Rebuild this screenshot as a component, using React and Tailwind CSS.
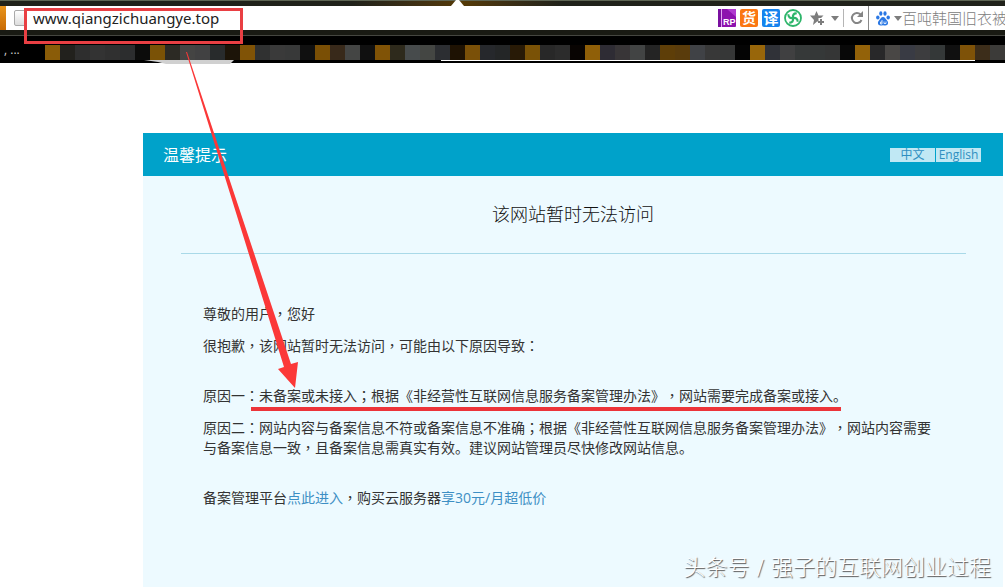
import React from 'react';

// one entry per 15px block of the blurred bookmarks bar
const mosaic = [
  '#000000', '#000000', '#000000', '#8a5c08', '#22211d', '#2e2e2e', '#333333', '#303030', '#2c2d2e', '#0c0c0b',
  '#7a5206', '#2c2a24', '#444443', '#414142', '#282b2c', '#1c1408', '#805306', '#303131', '#3a3a3a', '#383939', '#101010',
  '#7a4f05', '#38291a', '#444544', '#101010', '#805306', '#2e2a1c', '#474b4c', '#444643', '#2c2e32', '#1e1203',
  '#7a5008', '#26282c', '#242627', '#281a06', '#7a5206', '#282828', '#2c2c2c', '#080402', '#8f5f08', '#2e2c34',
  '#383537', '#424444', '#242424', '#5e3e08', '#5a3c0c', '#404246', '#383838', '#363737', '#040404', '#98660a',
  '#303238', '#404041', '#363939', '#353838', '#353636', '#080808', '#936209', '#282829', '#494745', '#393b44',
  '#3d3d3f', '#343838', '#101010', '#7e5208', '#3c2d1a', '#3c3b39',
];

const Caret = () => (
  <svg width="8" height="5" viewBox="0 0 8 5" aria-hidden="true">
    <path d="M0 0h8L4 5z" fill="#7d7d7d" />
  </svg>
);

const ProxyIcon = () => (
  <svg width="18" height="18" viewBox="0 0 18 18" aria-hidden="true">
    <rect width="18" height="18" rx="1" fill="#8d12ae" />
    <path d="M0 0h3v18H0z" fill="#7a10a0" />
    <path d="M3 0h1v18H3z" fill="#e3a5f2" />
    <path d="M9 0h9v8z" fill="#b03ad0" />
    <text x="5" y="16" fontSize="9" fontWeight="700" fontFamily="Liberation Sans, sans-serif" fill="#fff">RP</text>
  </svg>
);

const PinwheelIcon = () => (
  <svg width="18" height="18" viewBox="0 0 18 18" fill="none" aria-hidden="true">
    <circle cx="9" cy="9" r="8" stroke="#2db56a" strokeWidth="1.8" />
    {[20, 110, 200, 290].map((angle) => (
      <path key={angle} d="M9 9C7.500 6.500 8 4 11 3.500" stroke="#2db56a" strokeWidth="2.200" transform={`rotate(${angle} 9 9)`} />
    ))}
  </svg>
);

const StarIcon = () => (
  <svg width="15" height="15" viewBox="0 0 15 15" aria-hidden="true">
    <path d="M6.500 0l2 4.500h5L11 7H8.500v3.500H7L6.500 11 3 14l1-5-4-4.500h4.500z" fill="#7d7d7d" />
    <path d="M11 8v6M8 11h6" stroke="#7d7d7d" strokeWidth="2" />
  </svg>
);

const ReloadIcon = () => (
  <svg width="14" height="14" viewBox="0 0 14 14" fill="none" aria-hidden="true">
    <path d="M10.500 3.500A5 5 0 1 0 11.500 9" stroke="#858585" strokeWidth="2" />
    <path d="M13 0v6H7z" fill="#858585" />
  </svg>
);

const PawIcon = () => (
  <svg width="14" height="15" viewBox="0 0 14 15" aria-hidden="true">
    <g fill="#2b78e4">
      <ellipse cx="1.800" cy="6.500" rx="1.700" ry="2" />
      <ellipse cx="4.800" cy="2.500" rx="1.600" ry="2.200" />
      <ellipse cx="9" cy="2.500" rx="1.600" ry="2.200" />
      <ellipse cx="12.200" cy="6.500" rx="1.700" ry="2" />
      <path d="M7 6c2 0 2.500 2 4 3.500 2 2 1 5-1.500 5-1 0-1.500-.3-2.500-.3s-1.500.3-2.500.3C2 14.500 1 11.500 3 9.500 4.500 8 5 6 7 6z" />
    </g>
    <path d="M6 9v4H4.500v-2H6M8 10.500v2h2v-2" stroke="#fff" strokeWidth=".8" fill="none" />
  </svg>
);

// the wide comma, colon and semicolon sit in the middle of their cell
const Cn = ({ children }) =>
  children.split(/([，：；])/).map((part, i) =>
    i % 2 ? (
      <span key={i} lang="zh-TW" className="font-['Open_Sans','Noto_Sans_CJK_TC',sans-serif]">{part}</span>
    ) : (
      part
    )
  );

const BrowserBar = () => (
  <header className="relative">
    <div className="h-1.5 border-t border-[#5f6654] bg-linear-to-r from-[#20221a] from-35% via-[#553a05] via-46% to-[#20221a] to-56%" />
    <svg className="absolute left-[451px] top-0" width="13" height="6" viewBox="0 0 13 6" aria-hidden="true">
      <path d="M5 0h3l5 6H0z" fill="#fff" />
    </svg>

    <div className="flex h-6 items-center overflow-hidden bg-white">
      <div className="h-6 w-1.5 shrink-0 bg-linear-to-b from-[#e8941a] to-[#c96b04]" />
      <div className="ml-2 h-4 w-3 shrink-0 rounded-xs border border-[#aaa] bg-linear-to-b from-white to-[#ddd]" />
      <input
        aria-label="Address"
        defaultValue="www.qiangzichuangye.top"
        className="ml-[7px] min-w-0 flex-1 font-['Noto_Sans',sans-serif] text-[15px] leading-6 text-[#222] outline-none"
      />
      <div className="flex shrink-0 items-center gap-1">
        <button aria-label="Proxy"><ProxyIcon /></button>
        <button className="size-[18px] rounded-xs bg-[#fb7712] text-[14px] font-bold leading-[18px] text-white">货</button>
        <button className="size-[18px] rounded-xs bg-[#1583ee] text-[15px] font-bold leading-[18px] text-white">译</button>
        <button aria-label="Security"><PinwheelIcon /></button>
      </div>
      <button aria-label="Bookmark" className="ml-2 shrink-0"><StarIcon /></button>
      <button aria-label="Bookmark menu" className="ml-1.5 shrink-0"><Caret /></button>
      <div className="ml-1 h-[18px] w-px shrink-0 bg-[#b5b5b5]" />
      <button aria-label="Reload" className="ml-1.5 shrink-0"><ReloadIcon /></button>
      <div className="ml-1 h-6 w-px shrink-0 bg-[#888]" />
      <button aria-label="Search engine" className="ml-[7px] flex shrink-0 items-center gap-1">
        <PawIcon />
        <Caret />
      </button>
      <input
        aria-label="Search"
        placeholder="百吨韩国旧衣被"
        className="w-[103px] shrink-0 text-[15px] font-light leading-6 outline-none placeholder:text-[#808080]"
      />
    </div>

    <div className="h-1.5 border-b border-[#454640] bg-[#191a13]" />

    <div className="relative flex h-[27px] items-start overflow-hidden bg-black pt-[9px]">
      <div className="flex">
        {mosaic.map((color, i) => (
          <div key={i} className="h-[15px] w-[15px] shrink-0" style={{ backgroundColor: color }} />
        ))}
      </div>
      <span className="absolute left-1 top-1.5 text-[12px] leading-4 text-[#ccc]">, ...</span>
      <div className="absolute left-[441px] right-[30px] top-6 h-px bg-white" />
    </div>
    <svg className="absolute left-[144px] top-[60px]" width="90" height="5" viewBox="0 0 90 5" aria-hidden="true">
      <path d="M0 0h90l-4 4H22L14 2z" fill="#d0d0d0" />
    </svg>
  </header>
);

const Notice = () => (
  <main className="ml-[143px] mr-0.5 mt-[70px] flex-1 bg-[#edfaff] text-[#333]">
    <div className="flex h-[43px] items-center justify-between bg-[#00a2ca] pl-5 pr-[22px]">
      <h1 className="text-[16px] leading-6 text-white">温馨提示</h1>
      <nav className="flex gap-px text-[12px] leading-[14px] text-[#2f8fc0]">
        <a href="#zh" className="w-[45px] bg-[#c0e8f4] text-center">中文</a>
        <a href="#en" className="w-[45px] bg-[#c0e8f4] text-center">English</a>
      </nav>
    </div>

    <h2 className="pb-[27px] pt-[26px] text-center text-[18px] font-light leading-6 text-[#111]">该网站暂时无法访问</h2>
    <div className="ml-[38px] mr-[37px] h-px bg-[#a9d9e8]" />

    <div className="space-y-3 px-[60px] pb-12 pt-[50px] text-[14px] leading-5">
      <p><Cn>尊敬的用户，您好</Cn></p>
      <p className="mb-[30px]"><Cn>很抱歉，该网站暂时无法访问，可能由以下原因导致：</Cn></p>
      <p><Cn>原因一：未备案或未接入；根据《非经营性互联网信息服务备案管理办法》，网站需要完成备案或接入。</Cn></p>
      <p className="mb-[30px]">
        <Cn>原因二：网站内容与备案信息不符或备案信息不准确；根据《非经营性互联网信息服务备案管理办法》，网站内容需要与备案信息一致，且备案信息需真实有效。建议网站管理员尽快修改网站信息。</Cn>
      </p>
      <p>
        备案管理平台<a href="#platform" className="text-[#3d8fc4]">点此进入</a>
        <Cn>，购买云服务器</Cn>
        <a href="#offer" className="text-[#3d8fc4]">享30元/月超低价</a>
      </p>
    </div>
  </main>
);

const Annotations = () => (
  <div className="pointer-events-none absolute inset-0 overflow-hidden">
    <div className="absolute left-6 top-2 h-9 w-[219px] border-3 border-[#e93f43]" />
    <svg className="absolute left-[180px] top-[50px]" width="130" height="345" viewBox="180 50 130 345" aria-hidden="true">
      <path d="M186 52h1L291 364l7-2-3 26-17-19 6-2z" fill="#fb3838" />
    </svg>
    <div className="absolute left-[251px] top-[407px] h-1 w-[590px] bg-[#ec3439]" />
    <p className="absolute bottom-1 right-[14px] whitespace-pre font-['DejaVu_Sans','Noto_Sans_CJK_SC',sans-serif] text-[22px] font-light leading-[30px] text-white [text-shadow:1px_1px_1px_#555]">
      头条号 / 强子的互联网创业过程
    </p>
  </div>
);

export default function App() {
  return (
    <div
      lang="zh-CN"
      className="relative flex min-h-screen flex-col overflow-hidden bg-white font-['Open_Sans','Noto_Sans_CJK_SC',sans-serif] [text-spacing-trim:space-all]"
    >
      <BrowserBar />
      <Notice />
      <Annotations />
    </div>
  );
}
